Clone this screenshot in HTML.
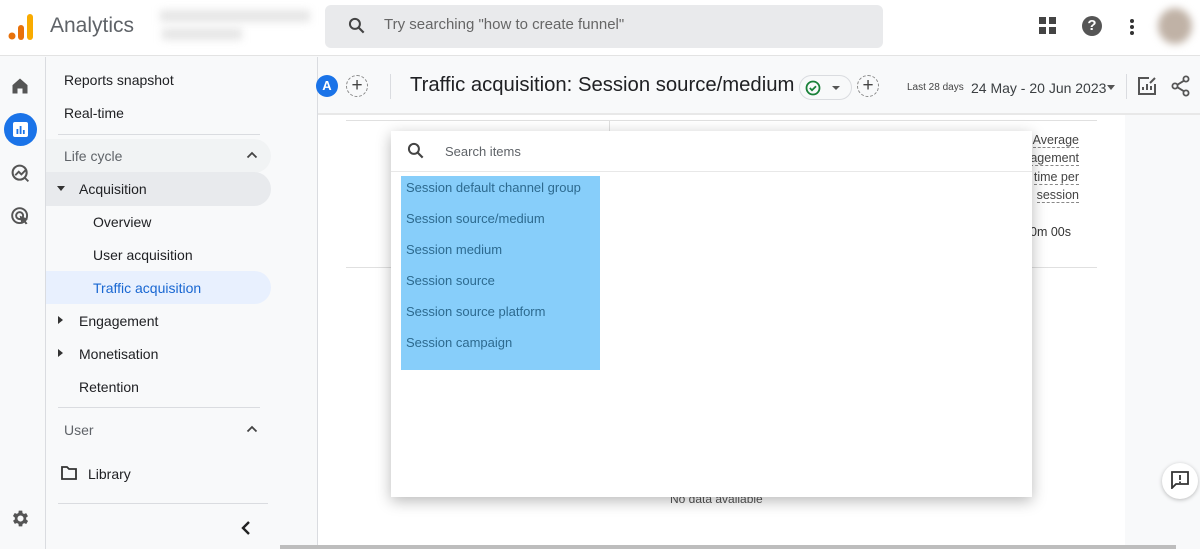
<!DOCTYPE html>
<html><head><meta charset="utf-8"><style>
*{box-sizing:border-box;margin:0;padding:0}
body{width:1200px;height:549px;overflow:hidden;font-family:"Liberation Sans",sans-serif;background:#f8f9fa;position:relative;color:#202124}
.a{position:absolute}
.nav{font-size:14px;color:#202124}
</style></head><body>
<!-- top bar -->
<div class="a" style="left:0;top:0;width:1200px;height:56px;background:#fff;border-bottom:1px solid #e3e3e3"></div>
<svg class="a" style="left:8px;top:13px" width="26" height="28"><circle cx="4" cy="23" r="3.5" fill="#e8710a"/><rect x="10" y="12" width="6" height="15" rx="3" fill="#e8710a"/><rect x="19" y="1" width="6" height="26" rx="3" fill="#f9ab00"/></svg>
<div class="a" style="left:50px;top:14px;font-size:21px;color:#5f6368">Analytics</div>
<div class="a" style="left:160px;top:10px;width:150px;height:12px;background:#e6e6e6;filter:blur(4px)"></div>
<div class="a" style="left:162px;top:28px;width:80px;height:12px;background:#e6e6e6;filter:blur(4px)"></div>
<div class="a" style="left:325px;top:5px;width:558px;height:43px;background:#e9eaec;border-radius:6px"></div>
<svg class="a" style="left:347px;top:16px" width="20" height="20" viewBox="0 0 24 24"><circle cx="9.5" cy="9.5" r="6" fill="none" stroke="#444" stroke-width="2.4"/><path d="M14 14l6 6" stroke="#444" stroke-width="2.6"/></svg>
<div class="a" style="left:384px;top:16px;font-size:15px;color:#666">Try searching "how to create funnel"</div>
<svg class="a" style="left:1039px;top:17px" width="18" height="18"><rect x="0" y="0" width="7" height="7" fill="#444"/><rect x="10" y="0" width="7" height="7" fill="#444"/><rect x="0" y="10" width="7" height="7" fill="#444"/><rect x="10" y="10" width="7" height="7" fill="#444"/></svg>
<div class="a" style="left:1082px;top:16px;width:20px;height:20px;border-radius:50%;background:#555;color:#fff;font-size:15px;font-weight:bold;text-align:center;line-height:20px">?</div>
<svg class="a" style="left:1129px;top:18px" width="6" height="18"><circle cx="3" cy="3" r="2" fill="#333"/><circle cx="3" cy="9" r="2" fill="#333"/><circle cx="3" cy="15" r="2" fill="#333"/></svg>
<div class="a" style="left:1158px;top:8px;width:34px;height:36px;border-radius:50%;background:#c0b2a6;filter:blur(4px)"></div>
<!-- left rail -->
<div class="a" style="left:45px;top:57px;width:1px;height:492px;background:#dadce0"></div>
<svg class="a" style="left:10px;top:76px" width="20" height="20" viewBox="0 0 24 24"><path d="M3 11L12 3l9 8v10h-6v-6H9v6H3z" fill="#555"/></svg>
<div class="a" style="left:4px;top:113px;width:33px;height:33px;border-radius:50%;background:#1a73e8"></div>
<svg class="a" style="left:12px;top:121px" width="17" height="17"><rect x="1" y="1" width="15" height="15" rx="2" fill="#fff"/><rect x="4.5" y="8" width="1.8" height="5" fill="#1a73e8"/><rect x="7.7" y="5" width="1.8" height="8" fill="#1a73e8"/><rect x="10.9" y="9" width="1.8" height="4" fill="#1a73e8"/></svg>
<svg class="a" style="left:10px;top:163px" width="21" height="21" viewBox="0 0 24 24"><circle cx="11" cy="11" r="8" fill="none" stroke="#555" stroke-width="2.4"/><path d="M6 14l4-4 3 3 5-5M17 17l4 4" fill="none" stroke="#555" stroke-width="2.2"/></svg>
<svg class="a" style="left:10px;top:206px" width="21" height="21" viewBox="0 0 24 24"><circle cx="11" cy="11" r="8.5" fill="none" stroke="#555" stroke-width="2.2"/><circle cx="11" cy="11" r="4" fill="none" stroke="#555" stroke-width="2.2"/><path d="M11 11l10 4-4 1 3 4-2 1-3-4-2 3z" fill="#555"/></svg>
<svg class="a" style="left:10px;top:508px" width="21" height="21" viewBox="0 0 24 24"><path d="M19.4 13a7.4 7.4 0 000-2l2.1-1.6-2-3.5-2.5 1a7 7 0 00-1.7-1L15 3h-4l-.4 2.7a7 7 0 00-1.7 1l-2.5-1-2 3.5L6.6 11a7.4 7.4 0 000 2l-2.1 1.6 2 3.5 2.5-1a7 7 0 001.7 1L11 21h4l.4-2.7a7 7 0 001.7-1l2.5 1 2-3.5zM13 15.5a3.5 3.5 0 110-7 3.5 3.5 0 010 7z" fill="#555" transform="translate(-1 0)"/></svg>
<!-- nav panel -->
<div class="a" style="left:317px;top:57px;width:1px;height:492px;background:#dadce0"></div>
<div class="a nav" style="left:64px;top:72px">Reports snapshot</div>
<div class="a nav" style="left:64px;top:105px">Real-time</div>
<div class="a" style="left:58px;top:134px;width:202px;height:1px;background:#dadce0"></div>
<div class="a" style="left:46px;top:139px;width:225px;height:34px;background:#f1f3f4;border-radius:0 17px 17px 0"></div>
<div class="a nav" style="left:64px;top:148px;color:#5f6368">Life cycle</div>
<svg class="a" style="left:246px;top:151px" width="12" height="8"><path d="M1.5 6.5L6 2l4.5 4.5" fill="none" stroke="#444" stroke-width="1.8"/></svg>
<div class="a" style="left:46px;top:172px;width:225px;height:34px;background:#e8eaed;border-radius:0 17px 17px 0"></div>
<div class="a" style="left:57px;top:186px;border-left:4px solid transparent;border-right:4px solid transparent;border-top:5px solid #333"></div>
<div class="a nav" style="left:79px;top:181px">Acquisition</div>
<div class="a nav" style="left:93px;top:214px">Overview</div>
<div class="a nav" style="left:93px;top:247px">User acquisition</div>
<div class="a" style="left:46px;top:271px;width:225px;height:33px;background:#e8f0fe;border-radius:0 17px 17px 0"></div>
<div class="a nav" style="left:93px;top:280px;color:#1967d2">Traffic acquisition</div>
<div class="a" style="left:58px;top:316px;border-top:4px solid transparent;border-bottom:4px solid transparent;border-left:5px solid #333"></div>
<div class="a nav" style="left:79px;top:313px">Engagement</div>
<div class="a" style="left:58px;top:349px;border-top:4px solid transparent;border-bottom:4px solid transparent;border-left:5px solid #333"></div>
<div class="a nav" style="left:79px;top:346px">Monetisation</div>
<div class="a nav" style="left:79px;top:379px">Retention</div>
<div class="a" style="left:58px;top:407px;width:202px;height:1px;background:#dadce0"></div>
<div class="a nav" style="left:64px;top:422px;color:#5f6368">User</div>
<svg class="a" style="left:246px;top:425px" width="12" height="8"><path d="M1.5 6.5L6 2l4.5 4.5" fill="none" stroke="#444" stroke-width="1.8"/></svg>
<svg class="a" style="left:61px;top:466px" width="16" height="14"><path d="M1 1h5l2 2h7v10H1z" fill="none" stroke="#333" stroke-width="1.8"/></svg>
<div class="a nav" style="left:88px;top:466px">Library</div>
<div class="a" style="left:58px;top:503px;width:210px;height:1px;background:#dadce0"></div>
<svg class="a" style="left:241px;top:520px" width="10" height="16"><path d="M8 2L2 8l6 6" fill="none" stroke="#222" stroke-width="2.4"/></svg>
<!-- header -->
<div class="a" style="left:318px;top:113px;width:882px;height:2px;background:#e8e8e8"></div>
<div class="a" style="left:316px;top:75px;width:22px;height:22px;border-radius:50%;background:#1a73e8;color:#fff;font-size:13px;font-weight:bold;text-align:center;line-height:22px">A</div>
<div class="a" style="left:346px;top:75px;width:22px;height:22px;border-radius:50%;border:1px dashed #888;text-align:center;line-height:19px;font-size:19px;color:#444">+</div>
<div class="a" style="left:390px;top:74px;width:1px;height:25px;background:#dadce0"></div>
<div class="a" style="left:410px;top:74px;font-size:20.3px;color:#202124">Traffic acquisition: Session source/medium</div>
<div class="a" style="left:799px;top:75px;width:53px;height:25px;border-radius:13px;border:1px solid #dadce0;background:#f8f9fa"></div>
<svg class="a" style="left:805px;top:80px" width="16" height="16"><circle cx="8" cy="8" r="6.5" fill="none" stroke="#188038" stroke-width="1.8"/><path d="M4.8 8l2.2 2.2 4-4" fill="none" stroke="#188038" stroke-width="1.8"/></svg>
<div class="a" style="left:832px;top:86px;border-left:4px solid transparent;border-right:4px solid transparent;border-top:4px solid #555"></div>
<div class="a" style="left:857px;top:75px;width:22px;height:22px;border-radius:50%;border:1px dashed #888;text-align:center;line-height:19px;font-size:19px;color:#444">+</div>
<div class="a" style="left:907px;top:82px;font-size:10px;color:#444">Last 28 days</div>
<div class="a" style="left:971px;top:80px;font-size:14px;color:#3c4043">24 May - 20 Jun 2023</div>
<div class="a" style="left:1107px;top:85px;border-left:4px solid transparent;border-right:4px solid transparent;border-top:5px solid #555"></div>
<div class="a" style="left:1126px;top:74px;width:1px;height:25px;background:#dadce0"></div>
<svg class="a" style="left:1137px;top:76px" width="20" height="20"><path d="M12 2H2v16h16V8" fill="none" stroke="#555" stroke-width="2"/><path d="M6 14v-3M10 14V8M14 14v-4M13 7l5-5" stroke="#555" stroke-width="2"/></svg>
<svg class="a" style="left:1171px;top:75px" width="20" height="22"><circle cx="15" cy="4" r="2.6" fill="none" stroke="#555" stroke-width="1.8"/><circle cx="4" cy="11" r="2.6" fill="none" stroke="#555" stroke-width="1.8"/><circle cx="15" cy="18" r="2.6" fill="none" stroke="#555" stroke-width="1.8"/><path d="M6.3 9.8l6.5-4M6.3 12.2l6.5 4" stroke="#555" stroke-width="1.8"/></svg>
<!-- card -->
<div class="a" style="left:318px;top:115px;width:807px;height:430px;background:#fff"></div>
<div class="a" style="left:346px;top:120px;width:751px;height:1px;background:#e0e0e0"></div>
<div class="a" style="left:609px;top:120px;width:1px;height:148px;background:#e0e0e0"></div>
<div class="a" style="left:346px;top:267px;width:751px;height:1px;background:#e0e0e0"></div>
<div class="a" style="left:1000px;top:131px;width:79px;text-align:right;font-size:12.5px;color:#444;line-height:18.3px">
<span style="border-bottom:1px dashed #888">Average</span><br><span style="border-bottom:1px dashed #888">agement</span><br><span style="border-bottom:1px dashed #888">time per</span><br><span style="border-bottom:1px dashed #888">session</span></div>
<div class="a" style="left:1030px;top:225px;font-size:12.5px;color:#333">0m 00s</div>
<div class="a" style="left:670px;top:492px;font-size:12px;color:#555">No data available</div>
<!-- dropdown -->
<div class="a" style="left:391px;top:131px;width:641px;height:366px;background:#fff;box-shadow:0 4px 14px rgba(0,0,0,.28)"></div>
<svg class="a" style="left:406px;top:141px" width="20" height="20" viewBox="0 0 24 24"><circle cx="9.5" cy="9.5" r="6" fill="none" stroke="#444" stroke-width="2.4"/><path d="M14 14l6 6" stroke="#444" stroke-width="2.6"/></svg>
<div class="a" style="left:445px;top:144px;font-size:13px;color:#5f6368">Search items</div>
<div class="a" style="left:391px;top:171px;width:641px;height:1px;background:#e8e8e8"></div>
<div class="a" style="left:401px;top:176px;width:199px;height:194px;background:#87cefa"></div>
<div class="a" style="left:406px;top:172px;font-size:13px;color:#2d6a8f;line-height:31.1px">Session default channel group<br>Session source/medium<br>Session medium<br>Session source<br>Session source platform<br>Session campaign</div>
<!-- feedback -->
<div class="a" style="left:1162px;top:463px;width:36px;height:36px;border-radius:50%;background:#fff;box-shadow:0 1px 4px rgba(0,0,0,.25)"></div>
<svg class="a" style="left:1171px;top:471px" width="18" height="18"><path d="M1 1h16v12H5l-4 4z" fill="none" stroke="#333" stroke-width="1.8"/><path d="M9 4v5M9 10.5v1.5" stroke="#333" stroke-width="1.8"/></svg>
<!-- scrollbar -->
<div class="a" style="left:280px;top:545px;width:896px;height:4px;background:#bdbdbd"></div>
</body></html>
